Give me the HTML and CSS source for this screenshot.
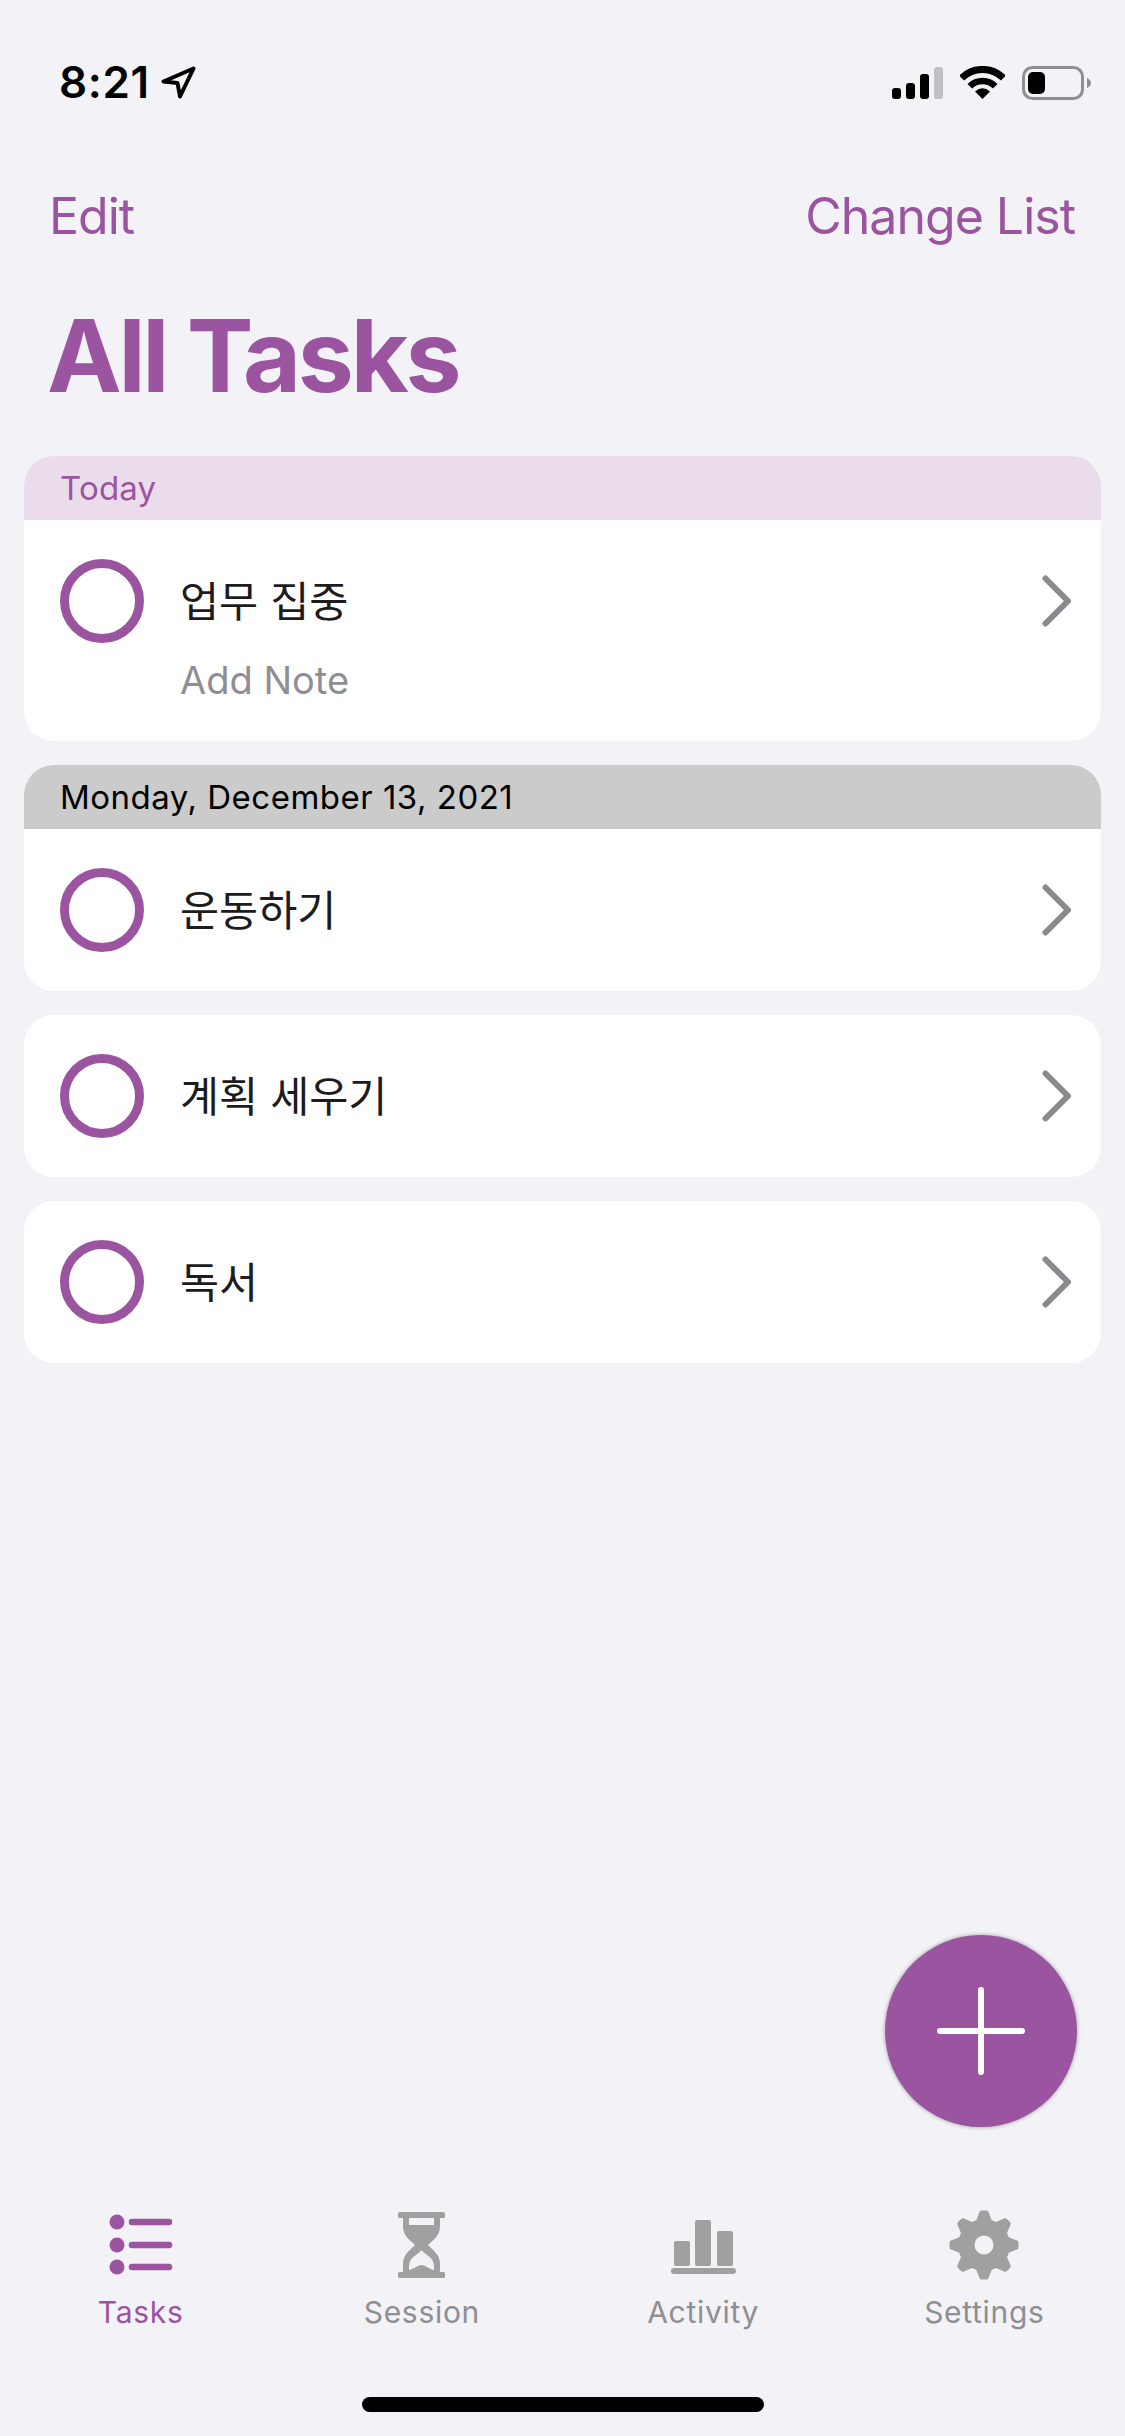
FILE: index.html
```html
<!DOCTYPE html>
<html lang="en">
<head>
    <meta charset="UTF-8">
    <meta name="viewport" content="width=device-width, initial-scale=1.0">
    <title>All Tasks</title>
    <link rel="stylesheet" href="styles.css">
</head>
<body>

    <div class="page">
        <div class="status-bar">
            <div class="status-time">
                <span>8:21</span>
                <svg class="location-icon" width="35" height="33" viewBox="0 0 35 33">
                    <path d="M32.500 2.500 L2.500 15.500 L16.500 17 L19 30.500 Z" fill="none" stroke="#000" stroke-width="4" stroke-linejoin="round"/>
                </svg>
            </div>
            <div class="status-icons">
                <svg width="51" height="32" viewBox="0 0 51 32">
                    <rect x="0" y="21" width="9" height="11" rx="3" fill="#000"/>
                    <rect x="14" y="16" width="9" height="16" rx="3" fill="#000"/>
                    <rect x="28" y="7" width="9" height="25" rx="3" fill="#000"/>
                    <rect x="42" y="0" width="9" height="32" rx="3" fill="#c0c0c6"/>
                </svg>
                <svg class="wifi-icon" width="45" height="33" viewBox="0 0 45 33">
                    <path d="M1.6 12.1 A29.5 29.5 0 0 1 43.4 12.1" fill="none" stroke="#000" stroke-width="7"/>
                    <path d="M9.8 20.3 A18 18 0 0 1 35.2 20.3" fill="none" stroke="#000" stroke-width="6.5"/>
                    <path d="M15 25.5 Q22.5 19 30 25.5 L22.5 33 Z" fill="#000"/>
                </svg>
                <svg class="battery-icon" width="69" height="34" viewBox="0 0 69 34">
                    <rect x="1.5" y="1.5" width="59" height="31" rx="9" fill="none" stroke="#8e8e93" stroke-width="3"/>
                    <rect x="6" y="6" width="17" height="22" rx="5" fill="#000"/>
                    <path d="M65 12 Q69 14 69 17 Q69 20 65 22 Z" fill="#8e8e93"/>
                </svg>
            </div>
        </div>

        <div class="nav-bar">
            <a class="nav-link">Edit</a>
            <a class="nav-link">Change List</a>
        </div>

        <h1 class="page-title">All Tasks</h1>

        <div class="task-list">
            <div class="card">
                <div class="card-header card-header-today">Today</div>
                <div class="task">
                    <div class="task-circle"></div>
                    <div class="task-name">업무 집중</div>
                    <svg class="chevron" width="29" height="52" viewBox="0 0 29 52"><path d="M3.500 3.500 L26 26 L3.500 48.500" fill="none" stroke="#8a8a8e" stroke-width="6" stroke-linecap="round" stroke-linejoin="round"/></svg>
                    <div class="task-note">Add Note</div>
                </div>
            </div>

            <div class="card">
                <div class="card-header">Monday, December 13, 2021</div>
                <div class="task">
                    <div class="task-circle"></div>
                    <div class="task-name">운동하기</div>
                    <svg class="chevron" width="29" height="52" viewBox="0 0 29 52"><path d="M3.500 3.500 L26 26 L3.500 48.500" fill="none" stroke="#8a8a8e" stroke-width="6" stroke-linecap="round" stroke-linejoin="round"/></svg>
                </div>
            </div>

            <div class="card">
                <div class="task">
                    <div class="task-circle"></div>
                    <div class="task-name">계획 세우기</div>
                    <svg class="chevron" width="29" height="52" viewBox="0 0 29 52"><path d="M3.500 3.500 L26 26 L3.500 48.500" fill="none" stroke="#8a8a8e" stroke-width="6" stroke-linecap="round" stroke-linejoin="round"/></svg>
                </div>
            </div>

            <div class="card">
                <div class="task">
                    <div class="task-circle"></div>
                    <div class="task-name">독서</div>
                    <svg class="chevron" width="29" height="52" viewBox="0 0 29 52"><path d="M3.500 3.500 L26 26 L3.500 48.500" fill="none" stroke="#8a8a8e" stroke-width="6" stroke-linecap="round" stroke-linejoin="round"/></svg>
                </div>
            </div>
        </div>

        <button class="add-button">
            <svg width="88" height="88" viewBox="0 0 88 88">
                <path d="M3 44 H85 M44 3 V85" fill="none" stroke="#fff" stroke-width="6" stroke-linecap="round"/>
            </svg>
        </button>

        <div class="tab-bar">
            <div class="tab tab-active">
                <svg class="tab-icon" width="64" height="72" viewBox="0 0 64 72">
                    <circle cx="8" cy="13" r="7.500" fill="#9b55a0"/>
                    <circle cx="8" cy="36" r="7.500" fill="#9b55a0"/>
                    <circle cx="8" cy="58" r="7.500" fill="#9b55a0"/>
                    <path d="M23 13 H60 M23 36 H60 M23 58 H60" fill="none" stroke="#9b55a0" stroke-width="6.500" stroke-linecap="round"/>
                </svg>
                <span>Tasks</span>
            </div>
            <div class="tab">
                <svg class="tab-icon" width="47" height="72" viewBox="0 -3 47 72">
                    <rect x="0" y="0" width="47" height="6" rx="1.500" fill="#a0a0a0"/>
                    <rect x="0" y="60" width="47" height="6" rx="1.500" fill="#a0a0a0"/>
                    <path fill-rule="evenodd" fill="#a0a0a0" d="M5 4 H42 V14 C42 24 36 27 30 33 C36 39 42 43 42 52 V62 H5 V52 C5 43 11 39 17 33 C11 27 5 24 5 14 Z M11 6 V13 H36 V6 Z M23.500 38 C20 43 11 45 11 54 V58 C16 57 20 53 23.500 53 C27 53 31 57 36 58 V54 C36 45 27 43 23.500 38 Z"/>
                </svg>
                <span>Session</span>
            </div>
            <div class="tab">
                <svg class="tab-icon" width="65" height="72" viewBox="0 0 65 72">
                    <rect x="3" y="32" width="16" height="25" rx="2" fill="#a0a0a0"/>
                    <rect x="24" y="11" width="16" height="46" rx="2" fill="#a0a0a0"/>
                    <rect x="46" y="22" width="16" height="35" rx="2" fill="#a0a0a0"/>
                    <rect x="0" y="59" width="65" height="6" rx="3" fill="#a0a0a0"/>
                </svg>
                <span>Activity</span>
            </div>
            <div class="tab">
                <svg class="tab-icon" width="70" height="72" viewBox="-35 -36 70 72">
                    <circle r="26" fill="#a0a0a0"/>
                    <path id="tooth" d="M-8 -24 L-4.500 -33 Q-4 -34.500 -2.500 -34.500 H2.500 Q4 -34.500 4.500 -33 L8 -24 Z" fill="#a0a0a0"/>
                    <use href="#tooth" transform="rotate(45)"/>
                    <use href="#tooth" transform="rotate(90)"/>
                    <use href="#tooth" transform="rotate(135)"/>
                    <use href="#tooth" transform="rotate(180)"/>
                    <use href="#tooth" transform="rotate(225)"/>
                    <use href="#tooth" transform="rotate(270)"/>
                    <use href="#tooth" transform="rotate(315)"/>
                    <circle r="9.500" fill="#f2f2f7"/>
                </svg>
                <span>Settings</span>
            </div>
        </div>

        <div class="home-indicator"></div>
    </div>

</body>
</html>
```

FILE: styles.css
```css
* {
    box-sizing: border-box;
}
body {
    margin: 0;
    background-color: #f2f2f7;
    font-family: Inter, "Noto Sans CJK KR", sans-serif;
}
.page {
    position: relative;
    display: flex;
    flex-direction: column;
    width: 1125px;
    height: 2436px;
    overflow: hidden;
}
.status-bar {
    display: flex;
    justify-content: space-between;
    align-items: center;
    height: 34px;
    margin-top: 65px;
    padding: 0 34px 0 59px;
}
.status-time {
    display: flex;
    align-items: center;
    gap: 11px;
    font-size: 44px;
    font-weight: 600;
    letter-spacing: 0.6px;
    color: #000;
}
.status-icons {
    display: flex;
    align-items: center;
    gap: 17px;
    padding-top: 1px;
}
.nav-bar {
    display: flex;
    justify-content: space-between;
    margin-top: 85px;
    padding: 0 50px 0 49px;
}
.nav-link {
    font-size: 50px;
    line-height: 64px;
    letter-spacing: -1px;
    color: #9b55a0;
}
.page-title {
    margin: 48px 0 40px;
    padding-left: 47px;
    font-size: 100px;
    line-height: 120px;
    font-weight: 700;
    letter-spacing: -3.2px;
    color: #9b55a0;
}
.task-list {
    display: flex;
    flex-direction: column;
    gap: 24px;
    margin: 0 24px;
    flex: 1;
}
.card {
    background-color: #fff;
    border-radius: 30px;
    overflow: hidden;
}
.card-header {
    height: 64px;
    padding-left: 36px;
    font-size: 33px;
    line-height: 64px;
    letter-spacing: 0.5px;
    color: #000;
    background-color: #cbcbcb;
}
.card-header-today {
    letter-spacing: 0.2px;
    color: #9b55a0;
    background-color: #ebdcec;
}
.task {
    display: grid;
    grid-template-columns: 84px 1fr 29px;
    column-gap: 36px;
    align-items: center;
    padding: 39px 30px 39px 36px;
}
.task-circle {
    width: 84px;
    height: 84px;
    border: 9px solid #9b55a0;
    border-radius: 50%;
}
.task-name {
    padding-bottom: 6px;
    font-size: 42.5px;
    color: #1c1c1e;
}
.task-note {
    grid-column: 2;
    margin-top: 16px;
    font-size: 38px;
    line-height: 43px;
    color: #8e8e93;
}
.add-button {
    position: absolute;
    right: 48px;
    bottom: 309px;
    display: flex;
    justify-content: center;
    align-items: center;
    width: 192px;
    height: 192px;
    padding: 0;
    border: none;
    border-radius: 50%;
    background-color: #9b55a0;
    box-shadow: 0 0 4px rgba(0, 0, 0, 0.35);
}
.tab-bar {
    display: grid;
    grid-template-columns: repeat(4, 1fr);
}
.tab {
    display: flex;
    flex-direction: column;
    align-items: center;
    gap: 13px;
    font-size: 30px;
    line-height: 36px;
    letter-spacing: 0.7px;
    color: #8e8e93;
}
.tab-active {
    color: #9b55a0;
}
.home-indicator {
    width: 402px;
    height: 15px;
    margin: 67px auto 24px;
    border-radius: 8px;
    background-color: #000;
}
```
